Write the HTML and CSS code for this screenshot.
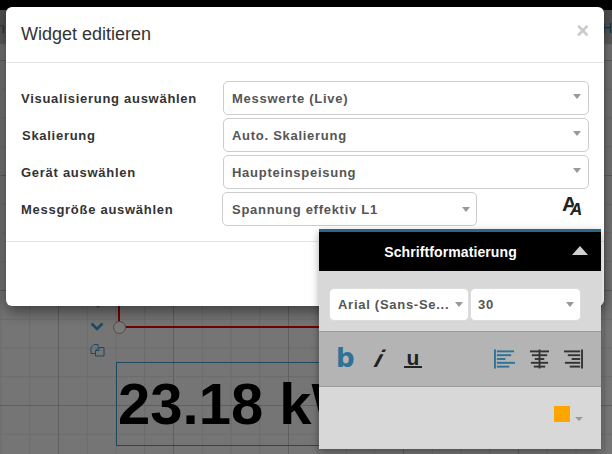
FILE: index.html
```html
<!DOCTYPE html>
<html lang="de">
<head>
<meta charset="utf-8">
<title>Widget editieren</title>
<link rel="stylesheet" href="styles.css">
</head>
<body>
<div class="topbar"></div>
<nav class="nav"><span class="nav-l">n</span><span class="nav-r">Ho</span></nav>
<main class="canvas">
  <div class="wire wire-v"></div>
  <div class="wire wire-h"></div>
  <div class="node"></div>
  <svg class="tool tool-up" viewBox="0 0 14 9"><path d="M1.5 1.5 7 7l5.500-5.500" fill="none" stroke="#1d4a63" stroke-width="2.600"/></svg>
  <svg class="tool tool-down" viewBox="0 0 14 9"><path d="M1.5 1.5 7 7l5.500-5.500" fill="none" stroke="#1d4a63" stroke-width="2.600"/></svg>
  <svg class="tool tool-copy" viewBox="0 0 15 14"><path d="M5 10.500H1V4.500L4 1.500H8V4M9 4.500V7.500H5.500V13H14V4.500H9L5.500 7.500" fill="none" stroke="#1d4a63" stroke-width="1"/></svg>
  <div class="widget">23.18 kW</div>
</main>

<section class="modal">
  <header class="modal-head">
    <h1 class="modal-title">Widget editieren</h1>
    <span class="close">×</span>
  </header>
  <div class="modal-body">
    <div class="row"><label class="lbl">Visualisierung auswählen</label><div class="sel">Messwerte (Live)</div></div>
    <div class="row"><label class="lbl lbl-in">Skalierung</label><div class="sel">Auto. Skalierung</div></div>
    <div class="row"><label class="lbl">Gerät auswählen</label><div class="sel">Haupteinspeisung</div></div>
    <div class="row row-last">
      <label class="lbl">Messgröße auswählen</label>
      <div class="sel sel-short">Spannung effektiv L1</div>
      <div class="aa"><span class="aa-big">A</span><span class="aa-small">A</span></div>
    </div>
  </div>
</section>

<aside class="panel">
  <div class="panel-head"><span class="panel-title">Schriftformatierung</span><span class="panel-caret"></span></div>
  <div class="panel-fonts">
    <div class="sel sel-font">Arial (Sans-Se...</div>
    <div class="sel sel-size">30</div>
  </div>
  <div class="panel-tools">
    <div class="fmt">
      <span class="f-b">b</span>
      <span class="f-i">i</span>
      <span class="f-u">u</span>
    </div>
    <div class="align">
      <svg class="al al-l" viewBox="0 0 22 20"><g fill="#2e7397"><rect width="2" height="20"/><rect x="3" y="1" width="18" height="2"/><rect x="3" y="5" width="15" height="2"/><rect x="3" y="9" width="9" height="2"/><rect x="3" y="13" width="19" height="2"/><rect x="3" y="17" width="13" height="2"/></g></svg>
      <svg class="al" viewBox="0 0 20 20"><g fill="#333"><rect x="9" width="2" height="20"/><rect y="1" width="20" height="2"/><rect x="2" y="5" width="16" height="2"/><rect x="5" y="9" width="10" height="2"/><rect x="1" y="13" width="18" height="2"/><rect x="4" y="17" width="12" height="2"/></g></svg>
      <svg class="al" viewBox="0 0 20 20"><g fill="#333"><rect x="18" width="2" height="20"/><rect y="1" width="17" height="2"/><rect x="4" y="5" width="13" height="2"/><rect x="8" y="9" width="9" height="2"/><rect x="1" y="13" width="16" height="2"/><rect x="6" y="17" width="11" height="2"/></g></svg>
    </div>
  </div>
  <div class="panel-color">
    <span class="swatch"></span><span class="swatch-caret"></span>
  </div>
</aside>
</body>
</html>
```
FILE: styles.css
```css
* { box-sizing: border-box; }
html, body { margin: 0; padding: 0; }
body {
  width: 612px;
  height: 454px;
  overflow: hidden;
  position: relative;
  background: #747474;
  font-family: "Liberation Sans", Arial, sans-serif;
}
.topbar { height: 10px; background: #000; }
.nav {
  height: 35px;
  background: linear-gradient(#4c4c4c, #5e5e5e);
  border-bottom: 1px solid #6e6e6e;
  display: flex;
  justify-content: space-between;
  align-items: center;
  font-size: 14px;
  color: #14394e;
  padding-top: 2px;
}
.nav-l { margin-left: -3px; }
.nav-r { margin-right: -8px; font-size: 14px; }
.canvas {
  position: relative;
  height: 409px;
  background-color: #757575;
  background-image:
    linear-gradient(90deg, #5f5f5f 1px, transparent 1px),
    linear-gradient(#5f5f5f 1px, transparent 1px),
    linear-gradient(90deg, #6b6b6b 1px, transparent 1px),
    linear-gradient(#6b6b6b 1px, transparent 1px);
  background-size: 115px 115px, 115px 115px, 28.75px 28.75px, 28.75px 28.75px;
  background-position: 58px 0, 0 15px, 0.5px 0, 0 15px;
}
.wire { position: absolute; background: #730000; }
.wire-v { left: 118px; top: 250px; width: 2px; height: 32px; }
.wire-h { left: 119px; top: 281px; width: 210px; height: 2px; }
.node {
  position: absolute;
  left: 113px;
  top: 276px;
  width: 13px;
  height: 13px;
  border-radius: 50%;
  background: #7a7a7a;
  border: 1px solid #4e4e4e;
}
.tool { position: absolute; }
.tool-up { left: 91px; top: 254px; width: 14px; height: 9px; }
.tool-down { left: 90px; top: 277px; width: 14px; height: 9px; }
.tool-copy { left: 90px; top: 298px; width: 15px; height: 14px; }
.widget {
  position: absolute;
  left: 116px;
  top: 317px;
  width: 260px;
  height: 84px;
  border: 1px solid #1d4a5f;
  color: #000;
  font-weight: 700;
  font-size: 58px;
  line-height: 82px;
  padding-left: 1px;
  white-space: nowrap;
}

.modal {
  position: absolute;
  left: 6px;
  top: 7px;
  width: 598px;
  height: 299px;
  background: #fff;
  border-radius: 6px;
  box-shadow: 0 5px 15px rgba(0, 0, 0, .5);
}
.modal-head {
  height: 56px;
  border-bottom: 1px solid #e5e5e5;
  padding: 0 15px;
  display: flex;
  justify-content: space-between;
  align-items: center;
}
.modal-title {
  margin: 0;
  font-size: 18px;
  font-weight: 400;
  color: #333;
}
.close {
  font-size: 22px;
  font-weight: 700;
  line-height: 1;
  color: #c9c9c9;
  margin-top: -8px;
}
.modal-body {
  height: 179px;
  border-bottom: 1px solid #e5e5e5;
  padding: 18px 15px 0;
  display: flex;
  flex-direction: column;
  gap: 3px;
}
.row { display: flex; align-items: center; height: 34px; }
.lbl {
  width: 202px;
  flex: none;
  font-size: 13px;
  font-weight: 700;
  color: #333;
  letter-spacing: .72px;
}
.lbl-in { padding-left: 1px; }
.sel {
  position: relative;
  flex: 1;
  height: 34px;
  line-height: 33px;
  padding-left: 8px;
  background: #fff;
  border: 1px solid #ccc;
  border-radius: 5px;
  font-size: 13px;
  font-weight: 700;
  color: #555;
  letter-spacing: .72px;
  white-space: nowrap;
}
.sel::after {
  content: "";
  position: absolute;
  right: 7px;
  top: 12px;
  border-style: solid;
  border-width: 5px 4px 0;
  border-color: #999 transparent transparent;
}
.sel-short { flex: none; width: 255px; margin-left: -1px; padding-left: 9px; }
.sel-short::after { right: 6px; top: 14px; }
.aa {
  position: relative;
  width: 24px;
  height: 24px;
  margin-left: 85px;
  flex: none;
  color: #222;
}
.aa-big, .aa-small { position: absolute; line-height: 1; }
.aa-big { left: 0; top: -4px; font-size: 21px; font-weight: 700; }
.aa-small { left: 8px; top: 4px; font-size: 17px; font-weight: 700; font-style: italic; text-shadow: -1px 0 #fff; }

.panel {
  position: absolute;
  left: 319px;
  top: 229px;
  width: 282px;
  height: 220px;
  background: #d8d8d8;
  box-shadow: 0 3px 8px rgba(0, 0, 0, .35);
}
.panel-head {
  height: 42px;
  background: #000;
  border-top: 3px solid #2a6788;
  position: relative;
  display: flex;
  align-items: center;
  justify-content: center;
  padding-right: 19px;
}
.panel-title { color: #fff; font-size: 14px; font-weight: 700; letter-spacing: .1px; }
.panel-caret {
  position: absolute;
  right: 13px;
  top: 14px;
  border-style: solid;
  border-width: 0 8px 9px;
  border-color: transparent transparent #d0d0d0;
}
.panel-fonts {
  height: 60px;
  padding: 17px 0 0 10px;
  display: flex;
  gap: 1px;
}
.sel-font { flex: none; width: 140px; height: 33px; line-height: 32px; border-color: #ddd; padding-left: 8px; }
.sel-size { flex: none; width: 111px; height: 33px; line-height: 32px; border-color: #ddd; padding-left: 7px; }
.sel-font::after { right: 5px; top: 13px; }
.sel-size::after { right: 6px; top: 13px; }
.panel-tools {
  height: 56px;
  background: #b4b4b4;
  border-top: 1px solid #9c9c9c;
  border-bottom: 1px solid #9c9c9c;
  display: flex;
  justify-content: space-between;
  align-items: center;
  padding: 0 18px 0 17px;
}
.fmt { display: flex; align-items: center; }
.f-b { width: 37px; font-family: "DejaVu Sans", sans-serif; font-size: 26px; font-weight: 700; color: #2e7397; line-height: 30px; margin-top: -2px; }
.f-i { width: 31px; font-size: 24px; font-weight: 700; color: #222; line-height: 30px; text-indent: 3px; transform: skewX(-28deg); }
.f-u { width: 18px; font-size: 21px; font-weight: 700; color: #222; line-height: 16px; border-bottom: 2px solid #222; text-align: center; }
.align { display: flex; gap: 15px; }
.al { width: 19px; height: 20px; display: block; }
.al-l { width: 21px; }
.panel-color {
  height: 62px;
  display: flex;
  align-items: flex-start;
  justify-content: flex-end;
  padding: 19px 18px 0 0;
}
.swatch { width: 16px; height: 16px; background: #ffa500; }
.swatch-caret {
  margin: 11px 0 0 5px;
  border-style: solid;
  border-width: 4px 4px 0;
  border-color: #999 transparent transparent;
}
```
